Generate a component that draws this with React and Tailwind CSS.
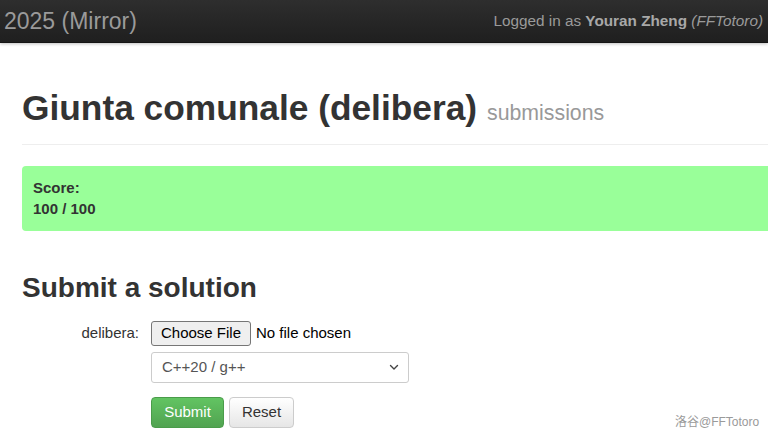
import React from "react";

export default function App() {
  return (
    <div className="relative w-full h-[439px] overflow-hidden bg-white" style={{ fontFamily: '"Liberation Sans", Arial, sans-serif' }}>
      <div className="h-[43px] flex items-center justify-between bg-gradient-to-b from-[#2e2e2e] to-[#1f1f1f] border-b border-[#151515] shadow-[0_1px_3px_rgba(0,0,0,0.25)]">
        <div className="pl-[4px] text-[23px] text-[#9a9a9a] leading-none">2025 (Mirror)</div>
        <div className="pr-[5px] text-[15.3px] text-[#9a9a9a] leading-none">
          Logged in as <b className="font-bold text-[#a8a8a8]">Youran Zheng</b> <i className="italic">(FFTotoro)</i>
        </div>
      </div>

      <div className="pl-[22px]">
        <div className="mt-[45px] pb-[14px] border-b border-[#eeeeee] flex items-baseline">
          <h1 className="text-[35.3px] leading-[40px] font-bold text-[#333333]">Giunta comunale (delibera)</h1>
          <span className="ml-[10px] text-[21.3px] text-[#999999]">submissions</span>
        </div>

        <div className="mt-[21px] rounded-l-[4px] bg-[#99ff99] pl-[11px] pt-[11px] pb-[12px] text-[15px] leading-[21px] font-bold text-[#333333]">
          <div>Score:</div>
          <div>100 / 100</div>
        </div>

        <h2 className="mt-[41px] text-[28px] leading-[32px] font-bold text-[#333333]">Submit a solution</h2>

        <div className="mt-[17px] flex flex-col">
          <div className="flex items-center">
            <div className="w-[117px] text-right text-[15px] text-[#333333]">delibera:</div>
            <div className="ml-[12px] flex items-center">
              <div className="h-[25px] w-[100px] flex items-center justify-center rounded-[3px] border border-[#767676] bg-[#efefef] text-[15px] text-black">Choose File</div>
              <span className="ml-[5px] text-[15px] text-black">No file chosen</span>
            </div>
          </div>
          <div className="mt-[6px] ml-[129px] h-[31px] w-[258px] flex items-center justify-between rounded-[3px] border border-[#cccccc] bg-white pl-[10px] pr-[8px] text-[15px] text-[#555555]">
            <span>C++20 / g++</span>
            <svg width="12" height="12" viewBox="0 0 12 12" fill="none">
              <path d="M2.5 4.5 L6 8 L9.5 4.5" stroke="#444" strokeWidth="1.4" strokeLinecap="round" strokeLinejoin="round" />
            </svg>
          </div>
          <div className="mt-[14px] ml-[129px] flex items-center gap-[5px]">
            <div className="h-[31px] w-[73px] flex items-center justify-center rounded-[4px] border border-[#4a9c4a] bg-gradient-to-b from-[#62c462] to-[#51a351] text-[15px] text-white">Submit</div>
            <div className="h-[31px] w-[65px] flex items-center justify-center rounded-[4px] border border-[#cccccc] bg-gradient-to-b from-white to-[#e6e6e6] text-[15px] text-[#333333]">Reset</div>
          </div>
        </div>
      </div>

      <div className="absolute left-[675px] top-[413px] text-[12px] text-[#9a9a9a]" style={{ fontFamily: '"Liberation Sans", "Noto Sans CJK SC", sans-serif' }}>洛谷@FFTotoro</div>
    </div>
  );
}
